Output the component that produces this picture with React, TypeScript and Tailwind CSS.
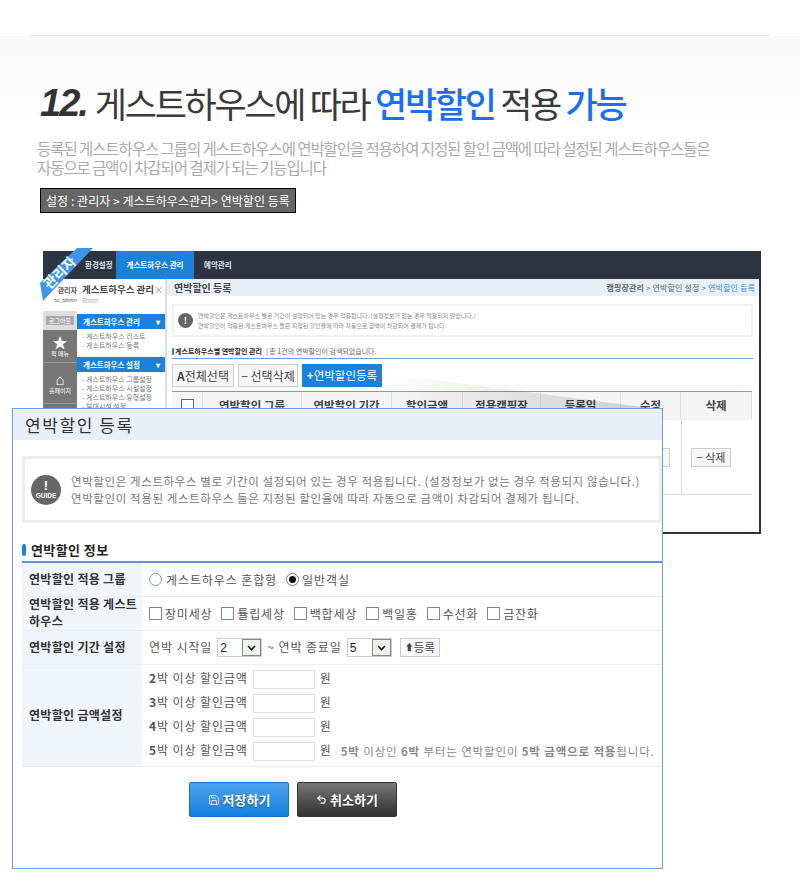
import { Save, Undo2 } from 'lucide-react';
import clsx from 'clsx';

const guests = ['장미세상', '튤립세상', '백합세상', '백일홍', '수선화', '금잔화'];
const nights = [2, 3, 4, 5];

function Row({ label, className, children }: { label: string; className: string; children: React.ReactNode }) {
  return (
    <div className={clsx('flex border-b border-[#e8eef1]', className)}>
      <div className="flex w-[120px] shrink-0 items-center bg-[#f0f5fa] pb-[3px] pl-[7px] pr-1 text-[12px] font-bold leading-[17px] tracking-[0.3px] text-[#333]">
        {label}
      </div>
      <div className="flex min-w-0 flex-1 items-center pl-[7px] text-[12px] tracking-[0.9px] text-[#555]">{children}</div>
    </div>
  );
}

function FakeSelect({ value }: { value: number }) {
  return (
    <span className="ml-[5px] flex h-[19px] w-[45px] items-center justify-between border border-[#ccc] bg-white pl-[2px] font-['Liberation_Sans',sans-serif] text-[12px] text-[#222]">
      {value}
      <span className="flex h-[17px] w-[19px] items-center justify-center border border-[#888] bg-[#eef0ee]">
        <svg width="9" height="6" viewBox="0 0 9 6">
          <path d="M1 1l3.5 3.5L8 1" fill="none" stroke="#111" strokeWidth="1.6" />
        </svg>
      </span>
    </span>
  );
}

function SmallBtn({ children, className }: { children: React.ReactNode; className?: string }) {
  return (
    <div className={clsx('flex items-center justify-center border border-[#ccc] bg-[#f7f7f7] text-[#444]', className)}>
      {children}
    </div>
  );
}

function Backdrop() {
  const head = [
    ['w-[99px]', '연박할인 그룹'],
    ['w-[90px]', '연박할인 기간'],
    ['w-[71px]', '할인금액'],
    ['w-[78px]', '적용캠핑장'],
    ['w-[80px]', '등록일'],
    ['w-[60px]', '수정'],
    ['w-[71px]', '삭제'],
  ];
  return (
    <div className="ml-[43px] mt-[38px] flex h-[283px] w-[718px] flex-col overflow-hidden border-b-2 border-r-2 border-[#2d3542] bg-white">
      <div className="flex h-[28px] shrink-0 items-center bg-[#2d3542] text-[7.5px] font-bold text-[#dfe3e8]">
        <span className="ml-[42px] w-[31px]">환경설정</span>
        <span className="flex h-full w-[78px] items-center justify-center bg-[#1a82dc] text-white">게스트하우스 관리</span>
        <span className="ml-[10px]">예약관리</span>
      </div>
      <div className="flex min-h-0 flex-1">
        <div className="flex w-[34px] shrink-0 flex-col items-center overflow-hidden text-[7px] text-[#555]">
          <div className="flex h-[32px] w-full flex-col items-end justify-center bg-white leading-[10px]">
            <span className="font-bold">관리자</span>
            <span className="text-[5px]">tu_admin</span>
          </div>
          <div className="flex h-[19px] w-full items-center justify-center bg-[#dedede]">
            <span className="flex h-[9px] w-[28px] items-center justify-center bg-[#aaa] text-[6px] text-white">로그아웃</span>
          </div>
          <div className="flex h-[32px] w-full flex-col items-center justify-center bg-[#777] text-white">
            <span className="text-[15px] leading-[15px]">★</span>
            <span className="text-[6px]">퀵 메뉴</span>
          </div>
          <div className="flex h-[41px] w-full flex-col items-center justify-center border-t border-[#999] bg-[#777] text-[6px] text-white">
            <span className="text-[15px] leading-[15px]">⌂</span>
            홈페이지
          </div>
          <div className="h-[40px] w-full border-t border-[#999] bg-[#777]" />
        </div>
        <div className="w-[90px] shrink-0 border-r-2 border-[#ddd] pl-[5px] text-[7px] text-[#777]">
          <div className="mt-[3px] flex justify-between whitespace-nowrap text-[9.5px] font-bold text-[#444]">
            게스트하우스 관리
            <span className="pr-[3px] font-normal text-[#999]">×</span>
          </div>
          <div className="text-[6px] text-[#aaa]">Room</div>
          {[
            ['게스트하우스 관리', ['- 게스트하우스 리스트', '- 게스트하우스 등록'], 'mt-[9px]', 'h-[28px]'],
            ['게스트하우스 설정', ['- 게스트하우스 그룹설정', '- 게스트하우스 시설설정', '- 게스트하우스 유형설정', '- 부대시설 설정'], '', 'h-[40px]'],
          ].map(([title, items, mt, h]) => (
            <div key={title as string} className={mt as string}>
              <div className="-ml-[5px] flex h-[15px] items-center justify-between bg-[#1a82dc] pl-[6px] pr-[5px] text-[7.5px] font-bold text-white">
                {title as string}
                <span>▾</span>
              </div>
              <div className={clsx('pt-[3px] leading-[9px]', h as string)}>
                {(items as string[]).map((i) => (
                  <div key={i} className="whitespace-nowrap">
                    {i}
                  </div>
                ))}
              </div>
            </div>
          ))}
        </div>
        <div className="min-w-0 flex-1">
          <div className="flex h-[17px] items-center justify-between bg-[#e8eff5] pl-[7px] pr-[4px]">
            <span className="text-[10px] font-bold text-[#444]">연박할인 등록</span>
            <span className="text-[8px] tracking-[0.15px] text-[#666]">
              <b>캠핑장관리</b> &gt; 연박할인 설정 &gt; <span className="text-[#2a8fe0]">연박할인 등록</span>
            </span>
          </div>
          <div className="ml-[5px] mt-[8px] flex h-[33px] w-[581px] items-center border-2 border-[#f0f0f0] pl-[4px]">
            <span className="flex h-[15px] w-[15px] items-center justify-center rounded-full bg-[#666] text-[9px] font-bold text-white">!</span>
            <div className="ml-[5px] text-[6px] leading-[10px] text-[#888]">
              <div>연박할인은 게스트하우스 별로 기간이 설정되어 있는 경우 적용됩니다. (설정정보가 없는 경우 적용되지 않습니다.)</div>
              <div>연박할인이 적용된 게스트하우스 들은 지정된 할인율에 따라 자동으로 금액이 차감되어 결제가 됩니다.</div>
            </div>
          </div>
          <div className="ml-[5px] mt-[7px] flex h-[14px] w-[581px] items-center text-[7px] text-[#666]">
            <span className="mr-[1px] h-[7px] w-[2px] rounded bg-[#1a82dc]" />
            <b className="text-[#222]">게스트하우스별 연박할인 관리</b>
            <span className="ml-[4px]">| 총 1건의 연박할인이 검색되었습니다.</span>
          </div>
          <div className="ml-[5px] w-[581px] border-t border-[#6f9ee0]" />
          <div className="ml-[5px] mt-[5px] flex h-[23px] gap-[4px] text-[12px]">
            <SmallBtn className="w-[62px]">
              <b>A</b>전체선택
            </SmallBtn>
            <SmallBtn className="w-[60px]">− 선택삭제</SmallBtn>
            <div className="flex w-[80px] items-center justify-center bg-[#1a82dc] text-[11.5px] text-white">
              <b>+</b>연박할인등록
            </div>
          </div>
          <div className="ml-[5px] mt-[4px] w-[580px] border-t border-[#6f9ee0]">
            <div className="flex h-[28px] border-b border-[#eee] bg-[#f5f5f5] text-[11.5px] font-bold text-[#444]">
              <div className="flex w-[31px] items-center justify-center border-r border-[#ddd]">
                <span className="h-[13px] w-[13px] border border-[#666] bg-white" />
              </div>
              {head.map(([w, t]) => (
                <div key={t} className={clsx('flex items-center justify-center border-r border-[#ddd]', w)}>
                  {t}
                </div>
              ))}
            </div>
            <div className="flex h-[75px] justify-end border-b border-[#ddd]">
              <div className="flex w-[60px] items-center pl-[9px]">
                <SmallBtn className="h-[19px] w-[40px] text-[11px]">수정</SmallBtn>
              </div>
              <div className="flex w-[71px] items-center border-l border-[#ddd] pl-[9px]">
                <SmallBtn className="h-[19px] w-[40px] text-[11px]">− 삭제</SmallBtn>
              </div>
            </div>
          </div>
        </div>
      </div>
    </div>
  );
}

function Dialog() {
  return (
    <div className="absolute left-[12px] top-[408px] h-[461px] w-[651px] border border-[#6f9ee0] bg-white">
      <div className="flex h-[31px] items-center bg-[#e8eff5] pl-[12px] text-[17px] tracking-[1.6px] text-[#333]">
        연박할인 등록
      </div>
      <div className="ml-[9px] mt-[16px] flex h-[67px] w-[640px] items-center border-[3px] border-[#eee] pl-[6px]">
        <div className="relative flex h-[30px] w-[30px] flex-col items-center justify-center rounded-full bg-[#666] font-['Liberation_Sans',sans-serif] font-bold leading-none text-white">
          <span className="text-[13px] leading-[11px]">!</span>
          <span className="text-[6.5px] leading-[9px]">GUIDE</span>
        </div>
        <div className="ml-[10px] whitespace-nowrap text-[11.5px] leading-[17px] tracking-[0.6px] text-[#777]">
          <div>연박할인은 게스트하우스 별로 기간이 설정되어 있는 경우 적용됩니다. (설정정보가 없는 경우 적용되지 않습니다.)</div>
          <div>연박할인이 적용된 게스트하우스 들은 지정된 할인율에 따라 자동으로 금액이 차감되어 결제가 됩니다.</div>
        </div>
      </div>
      <div className="ml-[9px] mt-[17px] flex h-[21px] items-center pb-[2px]">
        <span className="mr-[5px] h-[12px] w-[4px] rounded-full bg-[#1a82dc]" />
        <span className="text-[13px] font-bold tracking-[0.4px] text-[#222]">연박할인 정보</span>
      </div>
      <div className="ml-[9px] w-[640px] border-t-2 border-[#5f8fdc]">
        <Row label="연박할인 적용 그룹" className="h-[34px]">
          <span className="h-[13px] w-[13px] rounded-full border border-[#5aa3dc] bg-white" />
          <span className="ml-[4px]">게스트하우스 혼합형</span>
          <span className="ml-[9px] flex h-[13px] w-[13px] items-center justify-center rounded-full border border-[#777]">
            <span className="h-[7px] w-[7px] rounded-full bg-[#111]" />
          </span>
          <span className="ml-[3px]">일반객실</span>
        </Row>
        <Row label="연박할인 적용 게스트하우스" className="h-[34px]">
          {guests.map((g) => (
            <span key={g} className="mr-[9px] flex items-center gap-[3px] tracking-[0.8px]">
              <span className="h-[13px] w-[13px] border border-[#888] bg-white" />
              {g}
            </span>
          ))}
        </Row>
        <Row label="연박할인 기간 설정" className="h-[34px]">
          <span className="pb-[2px]">연박 시작일</span>
          <FakeSelect value={2} />
          <span className="ml-[5px] pb-[2px]">~ 연박 종료일</span>
          <FakeSelect value={5} />
          <SmallBtn className="ml-[8px] h-[19px] w-[40px] text-[11.5px] tracking-normal">
            <span className="text-[9px]">⬆</span>등록
          </SmallBtn>
        </Row>
        <Row label="연박할인 금액설정" className="h-[102px]">
          <div className="flex flex-col gap-[5px]">
            {nights.map((n) => (
              <div key={n} className="flex h-[19px] items-center">
                <span className="pb-[3px]">
                  <b>{n}</b>박 이상 할인금액
                </span>
                <span className="ml-[5px] h-[19px] w-[62px] border border-[#ddd] bg-white" />
                <span className="ml-[5px] pb-[3px]">원</span>
                {n === 5 && (
                  <span className="ml-[9px] whitespace-nowrap text-[11.5px] tracking-[0.85px] text-[#888]">
                    <b>5박</b> 이상인 <b>6박</b> 부터는 연박할인이 <b>5박 금액으로 적용</b>됩니다.
                  </span>
                )}
              </div>
            ))}
          </div>
        </Row>
      </div>
      <div className="ml-[176px] mt-[15px] flex gap-[8px] text-[13px] font-bold text-white [text-shadow:0_1px_1px_rgba(0,0,0,0.45)]">
        <div className="flex h-[35px] w-[100px] items-center justify-center gap-[3px] rounded-[2px] border border-[#1670bd] bg-gradient-to-b from-[#4ba3ea] to-[#0f80de]">
          <Save size={12} strokeWidth={1.5} />
          저장하기
        </div>
        <div className="flex h-[35px] w-[100px] items-center justify-center gap-[3px] rounded-[2px] border border-[#333] bg-gradient-to-b from-[#777] to-[#333]">
          <Undo2 size={11} strokeWidth={2.5} />
          취소하기
        </div>
      </div>
    </div>
  );
}

export default function App() {
  return (
    <div className="relative h-[883px] w-[800px] overflow-hidden bg-white font-['Noto_Sans_CJK_KR',sans-serif]">
      <div className="h-[35px]" />
      <div className="mx-[30px] h-[1px] bg-[#e6e6e6]" />
      <div className="bg-gradient-to-b from-[#f8f8f8] to-white pt-[46px]">
        <h1 className="ml-[40px] flex h-[42px] items-center whitespace-nowrap text-[35px] font-normal tracking-[-2.3px] text-[#3a3a3a]">
          <span className="mr-[8px] font-['Liberation_Sans',sans-serif] text-[38px] font-bold italic tracking-[-2px] text-[#333]">12.</span>
          게스트하우스에 따라&nbsp;
          <span className="font-medium text-[#1a6ff0]">연박할인</span>
          &nbsp;적용&nbsp;
          <span className="font-medium text-[#1a6ff0]">가능</span>
        </h1>
      </div>
      <p className="ml-[37px] mt-[15px] text-[15.5px] leading-[19px] tracking-[-1.07px] text-[#aaa]">
        등록된 게스트하우스 그룹의 게스트하우스에 연박할인을 적용하여 지정된 할인 금액에 따라 설정된 게스트하우스들은
        <br />
        자동으로 금액이 차감되어 결제가 되는 기능입니다
      </p>
      <div className="ml-[40px] mt-[11px] flex h-[25px] w-[256px] items-center border border-black bg-[#666] pl-[5px] text-[12px] tracking-[0.05px] text-white">
        설정 : 관리자 &gt; 게스트하우스관리&gt; 연박할인 등록
      </div>
      <Backdrop />
      <svg className="absolute left-[0px] top-[370px]" width="680" height="40" viewBox="0 0 680 40">
        <defs>
          <linearGradient id="wedge" x1="0" y1="0" x2="1" y2="0">
            <stop offset="0" stopColor="#000" stopOpacity="0" />
            <stop offset="1" stopColor="#000" stopOpacity="0.16" />
          </linearGradient>
        </defs>
        <polygon points="390,4 650,38 390,38" fill="url(#wedge)" />
      </svg>
      <svg className="absolute left-[36px] top-[246px]" width="60" height="58" viewBox="0 0 60 58">
        <polygon points="41,2 57,2 7,55 4,37" fill="#3d96e6" />
      </svg>
      <span className="absolute left-[40px] top-[262px] -rotate-45 text-[14px] font-bold text-white">관리자</span>
      <Dialog />
    </div>
  );
}
